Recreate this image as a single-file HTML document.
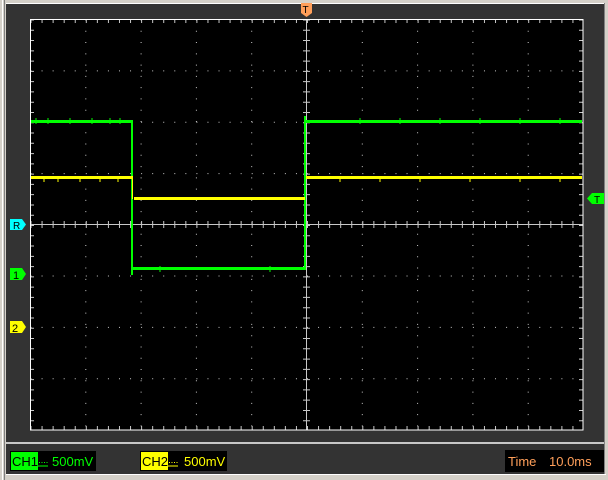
<!DOCTYPE html>
<html><head><style>
html,body{margin:0;padding:0;width:608px;height:480px;overflow:hidden;background:#d4d0c8}
svg{display:block}
text{font-family:"Liberation Sans",sans-serif}
</style></head><body>
<svg width="608" height="480" viewBox="0 0 608 480" xmlns="http://www.w3.org/2000/svg">
<rect x="0" y="0" width="608" height="480" fill="#d4d0c8"/>
<rect x="2" y="0" width="1" height="480" fill="#fff"/>
<rect x="4" y="0" width="1" height="480" fill="#808080"/>
<rect x="6" y="3" width="599" height="439" fill="#333"/>
<rect x="6" y="3" width="599" height="1" fill="#fff"/>
<rect x="6" y="442" width="599" height="2" fill="#c8c8c8"/>
<rect x="6" y="444" width="599" height="30" fill="#333"/>
<rect x="604" y="3" width="1" height="471" fill="#808080"/>
<rect x="6" y="474" width="600" height="1" fill="#fff"/>
<rect x="30" y="19" width="553" height="411" fill="#000"/>
<g stroke="#c8c8c8" stroke-width="1" fill="none">
<g stroke-dasharray="1 10.275">
<line x1="85.8" y1="19.5" x2="85.8" y2="430"/>
<line x1="141.1" y1="19.5" x2="141.1" y2="430"/>
<line x1="196.4" y1="19.5" x2="196.4" y2="430"/>
<line x1="251.7" y1="19.5" x2="251.7" y2="430"/>
<line x1="362.3" y1="19.5" x2="362.3" y2="430"/>
<line x1="417.6" y1="19.5" x2="417.6" y2="430"/>
<line x1="472.9" y1="19.5" x2="472.9" y2="430"/>
<line x1="528.2" y1="19.5" x2="528.2" y2="430"/>
</g>
<g stroke-dasharray="1 10.06">
<line x1="30.5" y1="70.9" x2="583" y2="70.9"/>
<line x1="30.5" y1="122.3" x2="583" y2="122.3"/>
<line x1="30.5" y1="173.6" x2="583" y2="173.6"/>
<line x1="30.5" y1="276" x2="583" y2="276"/>
<line x1="30.5" y1="327.4" x2="583" y2="327.4"/>
<line x1="30.5" y1="378.7" x2="583" y2="378.7"/>
</g>
<line x1="32" y1="19.5" x2="32" y2="430" stroke-width="4" stroke-dasharray="1 9.275"/>
<line x1="581" y1="19.5" x2="581" y2="430" stroke-width="4" stroke-dasharray="1 9.275"/>
<line x1="30.5" y1="21" x2="583" y2="21" stroke-width="4" stroke-dasharray="1 10.06"/>
<line x1="30.5" y1="428" x2="583" y2="428" stroke-width="4" stroke-dasharray="1 10.06"/>
<line x1="306.5" y1="19" x2="306.5" y2="430"/>
<line x1="30" y1="224.5" x2="583" y2="224.5"/>
<line x1="306.5" y1="19.5" x2="306.5" y2="430" stroke-width="7" stroke-dasharray="1 9.275"/>
<line x1="30.5" y1="224.5" x2="583" y2="224.5" stroke-width="7" stroke-dasharray="1 10.06"/>
<rect x="30.5" y="19.5" width="552.5" height="410.5" stroke="#fff"/>
</g>
<g shape-rendering="crispEdges">
<rect x="31" y="120" width="102" height="3" fill="#00ff00"/>
<rect x="131" y="120" width="2" height="155" fill="#00ff00"/>
<rect x="131" y="267" width="175" height="3" fill="#00ff00"/>
<rect x="304" y="116" width="2" height="154" fill="#00ff00"/>
<rect x="305" y="120" width="277" height="3" fill="#00ff00"/>
<rect x="31" y="176" width="102" height="3" fill="#ffff00"/>
<rect x="132" y="176" width="1" height="23" fill="#ffff00"/>
<rect x="134" y="197" width="171" height="3" fill="#ffff00"/>
<rect x="306" y="176" width="276" height="3" fill="#ffff00"/>
<path d="M36 118v6M48 118v6M70 118v6M92 118v6M110 118v6M120 118v6M360 118v6M400 118v6M440 118v6M480 118v6M520 118v6M560 118v6M160 266v6M270 266v6" stroke="#00ff00" stroke-width="1"/>
<path d="M44 177v5M58 177v5M80 177v5M100 177v5M118 177v5M340 177v5M380 177v5M420 177v5M470 177v5M520 177v5M560 177v5" stroke="#ffff00" stroke-width="1"/>
</g>
<path d="M10 219H22L26 224.5L22 230H10Z" fill="#00ffff"/>
<text x="13" y="229" font-size="10" fill="#000">R</text>
<path d="M10 268H22L26 274L22 280H10Z" fill="#00ff00"/>
<text x="13" y="279" font-size="11" fill="#000" font-family="Liberation Serif">1</text>
<path d="M10 321H22L26 327L22 333H10Z" fill="#ffff00"/>
<text x="12" y="332" font-size="11" fill="#000" font-family="Liberation Serif">2</text>
<path d="M604 193H592L587 198.5L592 204H604Z" fill="#00ff00"/>
<text x="594" y="203" font-size="10" fill="#000">T</text>
<path d="M301 3H312V13L306.5 17L301 13Z" fill="#ff9f5a"/>
<text x="302.5" y="13" font-size="10" fill="#000">T</text>
<rect x="10" y="451" width="86" height="20" fill="#000"/>
<rect x="11" y="452" width="27" height="18" fill="#00ff00"/>
<text x="12" y="466" font-size="13" fill="#000">CH1</text>
<path d="M38 466H48" stroke="#00ff00"/>
<path d="M39 462.5H48" stroke="#00ff00" stroke-dasharray="1 1.5"/>
<text x="52" y="466" font-size="13" fill="#00ff00">500mV</text>
<rect x="140" y="451" width="87" height="20" fill="#000"/>
<rect x="141" y="452" width="27" height="18" fill="#ffff00"/>
<text x="142" y="466" font-size="13" fill="#000">CH2</text>
<path d="M168 466H178" stroke="#ffff00"/>
<path d="M169 462.5H178" stroke="#ffff00" stroke-dasharray="1 1.5"/>
<text x="184" y="466" font-size="13" fill="#ffff00">500mV</text>
<rect x="505" y="450" width="99" height="22" fill="#000"/>
<text x="508" y="466" font-size="13" fill="#ff9f5a">Time</text>
<text x="549" y="466" font-size="13" fill="#ff9f5a">10.0ms</text>
</svg>
</body></html>
